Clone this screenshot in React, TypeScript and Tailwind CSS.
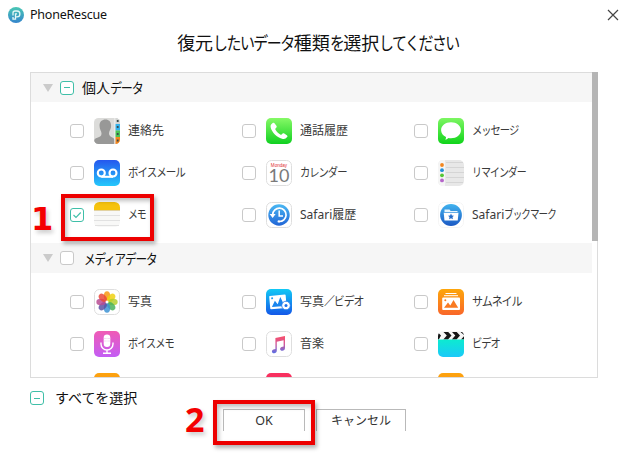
import { useState } from 'react';
import type { ReactNode } from 'react';
import clsx from 'clsx';

type CheckState = 'off' | 'on' | 'partial';

interface Item {
    id: string;
    label: string;
    condense?: number;
    icon: ReactNode;
}

const KANA_RUN = /([\u3040-\u30ff\uff0f]+)/;

// UI-style Japanese text: kanji keep full width, kana runs are narrowed
function JaText({ text, condense = 0.84 }: { text: string; condense?: number }) {
    return (
        <>
            {text.split(KANA_RUN).filter(Boolean).map((run, i) =>
                KANA_RUN.test(run) ? (
                    <span
                        key={i}
                        className="inline-block origin-left tracking-[-0.1em] whitespace-nowrap"
                        style={{ transform: `scaleX(${condense})`, marginRight: `${-(1 - condense) * run.length * 0.9}em` }}
                    >
                        {run}
                    </span>
                ) : (
                    <span key={i}>{run}</span>
                )
            )}
        </>
    );
}

function Tile({ id, from, to, children }: { id: string; from: string; to: string; children?: ReactNode }) {
    return (
        <svg viewBox="0 0 26 26" className="w-[26px] h-[26px] shrink-0">
            <defs>
                <linearGradient id={id} x1="0" y1="0" x2="0" y2="1">
                    <stop offset="0" stopColor={from} />
                    <stop offset="1" stopColor={to} />
                </linearGradient>
            </defs>
            <rect width="26" height="26" rx="5" fill={`url(#${id})`} />
            {children}
        </svg>
    );
}

function WhiteTile({ children, stroke = '#dedede' }: { children: ReactNode; stroke?: string }) {
    return (
        <svg viewBox="0 0 26 26" className="w-[26px] h-[26px] shrink-0">
            <rect x=".5" y=".5" width="25" height="25" rx="5" fill="#fff" stroke={stroke} />
            {children}
        </svg>
    );
}

const ContactsIcon = () => (
    <svg viewBox="0 0 26 26" className="w-[26px] h-[26px] shrink-0">
        <defs>
            <clipPath id="contacts-clip">
                <rect width="26" height="26" rx="4.5" />
            </clipPath>
        </defs>
        <g clipPath="url(#contacts-clip)">
            <rect width="26" height="26" fill="#dcdcda" />
            <path d="M11.500 1.500c3.400 0 5.600 2.300 5.600 6 0 2-.4 3.300-1.200 4.700-.5 1-.9 2-.9 3.300 0 2 1.200 3 3.300 3.900 1.600.8 2.200 1.600 2.200 3.600v3H0v-2.500c0-2.200 1.300-3 3.300-3.800 2.700-1.100 4.200-1.700 4.200-4 0-1.500-.5-2.400-1-3.500-.6-1.400-1-2.900-1-4.700 0-3.700 2.400-6 6-6z" fill="#989897" />
            <rect x="20.500" width="1" height="26" fill="#f6f6f6" />
            <rect x="21.500" width="4.500" height="6" fill="#d3d5d3" />
            <rect x="21.500" y="6" width="4.500" height="6.500" fill="#35b2ec" />
            <rect x="21.500" y="12.500" width="4.500" height="6.500" fill="#4cc455" />
            <rect x="21.500" y="19" width="4.500" height="7" fill="#f5861c" />
            <path d="M22.800 3h1.800M22.800 9h1.800M22.800 16h1.800M22.800 22.500h1.800" stroke="#3c4b4b" strokeWidth="2" />
        </g>
    </svg>
);

const PhoneIcon = () => (
    <Tile id="g-phone" from="#86f966" to="#10d021">
        <path d="M6.400 5.200c.9-.7 1.700-.6 2.300.2l1.700 2.300c.5.800.4 1.400-.2 2l-.7.8c-.4.400-.3.800 0 1.300 1.300 2 2.800 3.500 4.800 4.700.5.300.9.3 1.300-.1l.8-.7c.6-.5 1.200-.5 1.900-.1l2.500 1.600c.8.500.9 1.200.3 1.900-1.100 1.500-2.500 2.200-4.300 1.800C11 19.500 5.500 14 4.600 8.900c-.2-1.500.6-2.800 1.800-3.700z" fill="#fff" />
    </Tile>
);

const MessageIcon = () => (
    <Tile id="g-msg" from="#7df662" to="#10d41b">
        <path d="M13 4.200c5.600 0 9.900 3.500 9.900 8s-4.300 8-9.900 8c-.9 0-1.700-.1-2.500-.3-.8.9-2 1.500-3.300 1.600.6-.7.900-1.600.8-2.600-3-1.300-4.900-3.800-4.900-6.700 0-4.500 4.300-8 9.900-8z" fill="#fff" />
    </Tile>
);

const VoicemailIcon = () => (
    <Tile id="g-vm" from="#2657ee" to="#24c8fb">
        <g fill="none" stroke="#fff" strokeWidth="2.100">
            <circle cx="7.300" cy="13" r="3.500" />
            <circle cx="19" cy="13" r="3.500" />
            <path d="M7.300 16.800H19" />
        </g>
    </Tile>
);

const CalendarIcon = () => (
    <WhiteTile>
        <text x="13" y="6.500" textAnchor="middle" fontSize="4.600" fill="#e02f33" fontFamily="Liberation Sans, sans-serif">Monday</text>
        <text x="13" y="21.500" textAnchor="middle" fontSize="18" fill="#7a7a7a" fontFamily="Lato, sans-serif">10</text>
    </WhiteTile>
);

const RemindersIcon = () => (
    <svg viewBox="0 0 26 26" className="w-[26px] h-[26px] shrink-0">
        <rect width="26" height="26" rx="5" fill="#e8e8e8" />
        <path d="M5 0h2v26H5a5 5 0 0 1-5-5V5a5 5 0 0 1 5-5z" fill="#f5f5f5" />
        <path d="M8 2.500h17M8 7.500h18M8 12.500h18M8 17.500h18M8 22.500h17" stroke="#d2d2d2" strokeWidth=".9" />
        <circle cx="4" cy="5" r="1.900" fill="#f2861f" />
        <circle cx="4" cy="10.200" r="1.900" fill="#258fd8" />
        <circle cx="4" cy="15.300" r="1.900" fill="#55c635" />
        <circle cx="4" cy="20.400" r="1.900" fill="#b565ca" />
    </svg>
);

const NotesIcon = () => (
    <svg viewBox="0 0 26 26" className="w-[26px] h-[26px] shrink-0">
        <rect width="26" height="25" rx="5" fill="#f8f8f7" />
        <path d="M0 8V5.500A5.500 5.500 0 0 1 5.500 0h15A5.500 5.500 0 0 1 26 5.500V8z" fill="#f6c30d" />
        <path d="M0 8.500h26" stroke="#dcc88c" strokeWidth=".8" />
        <path d="M0 13.500h26M0 18.500h26M1 23.500h24" stroke="#dedede" strokeWidth=".9" />
    </svg>
);

const SafariHistoryIcon = () => (
    <WhiteTile>
        <defs>
            <linearGradient id="g-hist" x1="0" y1="0" x2="0" y2="1">
                <stop offset="0" stopColor="#4ab8f3" />
                <stop offset="1" stopColor="#2165d6" />
            </linearGradient>
        </defs>
        <circle cx="13" cy="13" r="10.700" fill="url(#g-hist)" />
        <path d="M6.700 12.500A6.700 6.700 0 1 1 13 19.500" fill="none" stroke="#fff" strokeWidth="1.700" />
        <path d="M3.600 12h6l-3 4z" fill="#fff" />
        <path d="M13.200 8.500V14H17" fill="none" stroke="#fff" strokeWidth="1.500" />
        <circle cx="12.800" cy="19.400" r="1.200" fill="#fff" />
    </WhiteTile>
);

const SafariBookmarkIcon = () => (
    <WhiteTile stroke="#f5f5f5">
        <defs>
            <linearGradient id="g-book" x1="0" y1="0" x2="0" y2="1">
                <stop offset="0" stopColor="#41b3ee" />
                <stop offset="1" stopColor="#1b59c4" />
            </linearGradient>
        </defs>
        <circle cx="13" cy="13" r="10.900" fill="url(#g-book)" />
        <path d="M6.500 7.500h5l1.200 1.600h6.800v1H6.500z" fill="#e6f5fd" />
        <path d="M5.700 10.800h14.800l-.8 7.700H6.500z" fill="#fff" />
        <path d="m13 11.500.9 1.900 2.100.3-1.500 1.400.4 2.100-1.900-1-1.900 1 .4-2.100-1.500-1.400 2.100-.3z" fill="#256cc9" />
    </WhiteTile>
);

const PETALS = ['#f8960f', '#efd00f', '#b3ce2c', '#46b25b', '#3c91d3', '#5a4fa3', '#b84a91', '#ea4637'];

const PhotosIcon = () => (
    <WhiteTile>
        {PETALS.map((color, i) => (
            <ellipse key={color} cx="13" cy="7" rx="3.200" ry="4.700" fill={color} opacity=".84" transform={`rotate(${i * 45} 13 13)`} />
        ))}
        <circle cx="13" cy="13" r="1.200" fill="#fff" />
    </WhiteTile>
);

const PhotoVideoIcon = () => (
    <Tile id="g-pv" from="#12c9f5" to="#1458e8">
        <g transform="rotate(-5 12 13)">
            <rect x="3.700" y="6.200" width="16.500" height="13.500" rx=".8" fill="#fff" />
            <path d="m5.500 17.500 3.500-6 2.500 3.800 3.200-7 3.600 9.200z" fill="#1b86ee" />
            <circle cx="6.500" cy="8.800" r="1" fill="#1b9cf0" />
        </g>
        <circle cx="20" cy="16.500" r="4.300" fill="#fff" stroke="#1875ec" strokeWidth=".8" />
        <circle cx="20" cy="16.500" r="1.500" fill="#1b6fea" />
    </Tile>
);

const ThumbnailIcon = () => (
    <Tile id="g-thumb" from="#fda60b" to="#f9662a">
        <path d="M7.500 4.500h11M6 6.700h14" stroke="#fff" strokeWidth="1" />
        <rect x="4.200" y="8.500" width="17.800" height="12.500" rx="1" fill="#fff" />
        <path d="m6 18.700 4-5.200 2.300 3 3.200-5.500 4.700 7.700z" fill="#f97a22" />
        <circle cx="7.300" cy="11.200" r="1" fill="#f97a22" />
    </Tile>
);

const VoiceMemoIcon = () => (
    <Tile id="g-memo" from="#f05bb5" to="#c35df5">
        <rect x="9.700" y="3.500" width="6.600" height="12.500" rx="3.300" fill="#fff" />
        <path d="M9.700 7.500h3M9.700 10h3M13.300 7.500h3M13.300 10h3" stroke="#edc0ed" strokeWidth=".6" />
        <path d="M7 11.500v1.500a6 6 0 0 0 12 0v-1.500M13 19v3M9 22.200h8" fill="none" stroke="#fff" strokeWidth="1.400" />
    </Tile>
);

const MusicIcon = () => (
    <WhiteTile>
        <defs>
            <linearGradient id="g-music" x1="0" y1="0" x2="0" y2="1">
                <stop offset="0" stopColor="#fa4d68" />
                <stop offset=".45" stopColor="#d45a98" />
                <stop offset="1" stopColor="#5a6fe6" />
            </linearGradient>
        </defs>
        <path d="M9.400 7.100 19 5v12c0 1.700-1.200 2.700-2.700 2.700-1.300 0-2.200-.7-2.200-1.800 0-1.200 1-2 2.500-2.200l1-.2V9.300l-6.800 1.500v8.700c0 1.700-1.200 2.700-2.700 2.700-1.300 0-2.200-.7-2.200-1.800 0-1.200 1-2 2.500-2.200l1-.2z" fill="url(#g-music)" />
    </WhiteTile>
);

const VideoIcon = () => (
    <svg viewBox="0 0 26 26" className="w-[26px] h-[26px] shrink-0">
        <defs>
            <linearGradient id="g-video" x1="0" y1="0" x2="0" y2="1">
                <stop offset="0" stopColor="#0cebd0" />
                <stop offset="1" stopColor="#1bc8fa" />
            </linearGradient>
            <clipPath id="video-clip">
                <rect width="26" height="26" rx="5" />
            </clipPath>
        </defs>
        <g clipPath="url(#video-clip)">
            <rect width="26" height="9" fill="#f6f6f6" />
            <path d="M5.500 1h4.700l3.300 3.500L10 8.500H5.300l3.500-4zM14 1h4.700L22 4.500l-3.500 4h-4.700l3.500-4zM22.500 1H26v3zM0 1.500l3 3L.8 8.500H0zM23 8.500l3-3.200v3.200z" fill="#151515" />
            <rect y="8.500" width="26" height="18" fill="url(#g-video)" />
        </g>
    </svg>
);

const OrangeIcon = ({ id }: { id: string }) => (
    <Tile id={id} from="#fda30e" to="#f98a1c">
        <rect x="6.500" y="4" width="13" height="15" rx="1" fill="#fff" opacity=".35" />
    </Tile>
);

const personalItems: Item[] = [
    { id: 'contacts', label: '連絡先', icon: <ContactsIcon /> },
    { id: 'calls', label: '通話履歴', icon: <PhoneIcon /> },
    { id: 'messages', label: 'メッセージ', condense: 0.86, icon: <MessageIcon /> },
    { id: 'voicemail', label: 'ボイスメール', condense: 0.88, icon: <VoicemailIcon /> },
    { id: 'calendar', label: 'カレンダー', condense: 0.86, icon: <CalendarIcon /> },
    { id: 'reminders', label: 'リマインダー', condense: 0.83, icon: <RemindersIcon /> },
    { id: 'notes', label: 'メモ', condense: 0.82, icon: <NotesIcon /> },
    { id: 'safari-history', label: 'Safari履歴', icon: <SafariHistoryIcon /> },
    { id: 'safari-bookmark', label: 'Safariブックマーク', condense: 0.8, icon: <SafariBookmarkIcon /> },
];

const mediaItems: Item[] = [
    { id: 'photos', label: '写真', icon: <PhotosIcon /> },
    { id: 'photo-video', label: '写真／ビデオ', condense: 0.91, icon: <PhotoVideoIcon /> },
    { id: 'thumbnails', label: 'サムネイル', condense: 0.92, icon: <ThumbnailIcon /> },
    { id: 'voice-memo', label: 'ボイスメモ', condense: 0.85, icon: <VoiceMemoIcon /> },
    { id: 'music', label: '音楽', icon: <MusicIcon /> },
    { id: 'video', label: 'ビデオ', condense: 0.86, icon: <VideoIcon /> },
];

function Checkbox({ state, onClick }: { state: CheckState; onClick?: () => void }) {
    return (
        <button
            onClick={onClick}
            className={clsx(
                'w-3.5 h-3.5 shrink-0 rounded-[3px] border bg-white flex items-center justify-center',
                state === 'off' ? 'border-[#c9c9c9]' : 'border-[#3fbfa8]'
            )}
        >
            {state === 'partial' && <span className="w-1.5 h-px bg-[#3fbfa8]" />}
            {state === 'on' && (
                <svg viewBox="0 0 12 12" className="w-3 h-3">
                    <path d="M2.500 6 5 8.500 9.700 3.500" fill="none" stroke="#3fbfa8" strokeWidth="1.100" />
                </svg>
            )}
        </button>
    );
}

function SectionHeader({ state, className, children }: { state: CheckState; className: string; children: ReactNode }) {
    return (
        <div className={clsx('flex items-center bg-[#f6f6f6] pl-3', className)}>
            <svg viewBox="0 0 10 8" className="w-2.5 h-2 mr-[7px]">
                <path d="M0 0h10L5 8z" fill="#cbcbcb" />
            </svg>
            <Checkbox state={state} />
            {children}
        </div>
    );
}

export default function App() {
    const [selected, setSelected] = useState<string[]>(['notes']);

    const toggle = (id: string) => {
        setSelected((prev) => (prev.includes(id) ? prev.filter((x) => x !== id) : [...prev, id]));
    };

    const renderItems = (items: Item[]) =>
        items.map((item) => (
            <div key={item.id} className="flex items-center h-[26px]">
                <Checkbox state={selected.includes(item.id) ? 'on' : 'off'} onClick={() => toggle(item.id)} />
                <div className="ml-2.5 mr-2">{item.icon}</div>
                <span className="text-[12px] leading-4 text-[#3a3a3a] whitespace-nowrap">
                    <JaText text={item.label} condense={item.condense} />
                </span>
            </div>
        ));

    return (
        <div className="relative w-[628px] h-[460px] bg-white overflow-hidden flex flex-col text-[#111] font-['Noto_Sans','Noto_Sans_CJK_JP',sans-serif]">
            <div className="flex items-center h-[30px] pl-2 pr-[9px]">
                <svg viewBox="0 0 16 16" className="w-4 h-4">
                    <defs>
                        <linearGradient id="g-logo" x1="0" y1="0" x2="0" y2="1">
                            <stop offset="0" stopColor="#49c7b4" />
                            <stop offset="1" stopColor="#3585cc" />
                        </linearGradient>
                    </defs>
                    <circle cx="8" cy="8" r="8" fill="url(#g-logo)" />
                    <path d="M5 8.500V6Q5 4 7 4h2a2.900 2.900 0 0 1 0 5.800H7.500V6.800H9M5 10v2.200h2.500V10" fill="none" stroke="#e4f8f7" strokeWidth="1.300" />
                </svg>
                <span className="ml-1.5 text-[12.5px] leading-5 tracking-[-0.22px]">PhoneRescue</span>
                <svg viewBox="0 0 12 12" className="w-3 h-3 ml-auto">
                    <path d="m1 1 10 10M11 1 1 11" stroke="#444" strokeWidth="1.200" />
                </svg>
            </div>

            <h1 className="h-[42px] pb-4 pl-2 flex items-center justify-center text-[18px] whitespace-nowrap">
                <JaText text="復元したいデータ種類を選択してください" condense={0.83} />
            </h1>

            <div className="relative mx-[30px] h-[306px] border border-[#dcdcdc] w-[568px]">
                <div className="h-full overflow-hidden pr-[5px]">
                    <SectionHeader state="partial" className="h-[29px]">
                        <span className="ml-2 text-[14px]">
                            <JaText text="個人データ" condense={0.86} />
                        </span>
                    </SectionHeader>
                    <div className="grid grid-cols-[172px_172px_172px] gap-y-4 pl-[39px] pt-4 pb-[15px]">
                        {renderItems(personalItems)}
                    </div>
                    <SectionHeader state="off" className="h-[30px]">
                        <span className="ml-2.5 text-[14px]">
                            <JaText text="メディアデータ" condense={0.83} />
                        </span>
                    </SectionHeader>
                    <div className="grid grid-cols-[172px_172px_172px] gap-y-4 pl-[39px] pt-4">
                        {renderItems(mediaItems)}
                        <div className="pl-6"><OrangeIcon id="g-more1" /></div>
                        <div className="pl-6"><Tile id="g-more2" from="#f8305f" to="#f8305f" /></div>
                        <div className="pl-6"><Tile id="g-more3" from="#fda30e" to="#f98a1c" /></div>
                    </div>
                </div>
                <div className="absolute -top-px -right-px w-1.5 h-[169px] bg-[#b5b5b5]" />
            </div>

            <div className="flex items-center h-3.5 mt-[13px] ml-[30px]">
                <Checkbox state="partial" />
                <span className="ml-[11px] text-[14px] leading-5">すべてを選択</span>
            </div>
            <div className="flex gap-[11px] mt-1 ml-[223px] text-[#333]">
                <button className="w-[82px] h-[22px] border border-b-0 border-[#b9b9b9] text-[12.5px] leading-5">OK</button>
                <button className="w-[90px] h-[22px] border border-b-0 border-[#b9b9b9] text-[12px] leading-5">キャンセル</button>
            </div>

            {/* step markers */}
            <div className="absolute left-[61px] top-[194px] w-[93px] h-[47px] border-4 border-[#ed0000] shadow-[2px_3px_4px_rgba(0,0,0,0.3),inset_2px_3px_4px_rgba(0,0,0,0.25)] pointer-events-none" />
            <span className="absolute left-[31px] top-[203px] text-[32px] leading-8 font-bold text-[#f40000] font-['DejaVu_Sans',sans-serif] [text-shadow:2px_3px_4px_rgba(0,0,0,0.2)]">1</span>
            <div className="absolute left-[213px] top-[400px] w-[102px] h-[45px] border-4 border-[#ed0000] shadow-[2px_3px_4px_rgba(0,0,0,0.3),inset_2px_3px_4px_rgba(0,0,0,0.25)] pointer-events-none" />
            <span className="absolute left-[185px] top-[403px] text-[34px] leading-8 font-bold text-[#f40000] [text-shadow:2px_3px_4px_rgba(0,0,0,0.2)]">2</span>
        </div>
    );
}
